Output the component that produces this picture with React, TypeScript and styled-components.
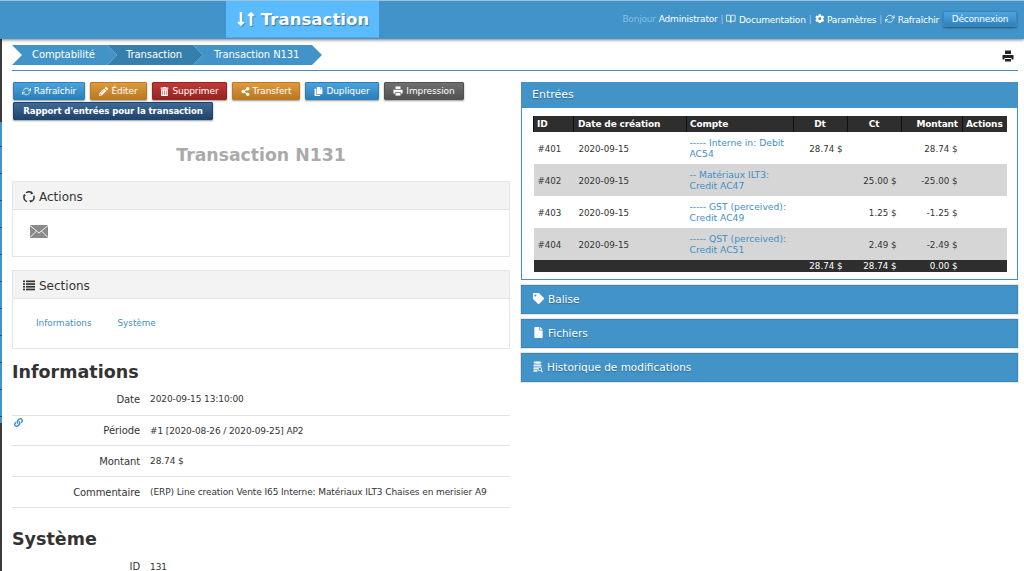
import React from "react";
import styled, { createGlobalStyle } from "styled-components";
import { FaPencilAlt, FaTrashAlt, FaShareAlt, FaCopy, FaCog, FaTag, FaFile, FaLink, FaLongArrowAltDown, FaLongArrowAltUp } from "react-icons/fa";
import { FiBookOpen, FiRefreshCw } from "react-icons/fi";

const Global = createGlobalStyle`
  html, body { margin: 0; padding: 0; background: #fff; height: 571px; overflow: hidden; }
  body { font-family: "DejaVu Sans", Verdana, sans-serif; font-size: 9px; color: #333; }
  * { box-sizing: border-box; }
`;
const Page = styled.div`
  width: 1024px; height: 571px; overflow: hidden; position: relative; background: #fff;
`;
const EdgeStrip = styled.div`
  position: absolute; left: 0; top: 39px; width: 2px; height: 532px;
  background:
    linear-gradient(#3a3a3a 0 83px, transparent 83px 384px, #3a3a3a 384px),
    repeating-linear-gradient(#4193c8 0 26px, #2f4f66 26px 27px);
`;
const Header = styled.header`
  height: 39px; background: #4193c8; border-top: 1px solid #9cc4dc;
  box-shadow: 0 1px 3px rgba(0,0,0,.5); display: flex; justify-content: space-between; position: relative; z-index: 2;
  padding: 0 7px 0 226px;
`;
const Logo = styled.div`
  width: 153px; height: 36px; background: #5abcff; color: #fff; display: flex; align-items: center; justify-content: center; gap: 5px;
  font: bold 16.6px "DejaVu Sans", sans-serif; text-shadow: 1px 1px 1px rgba(0,0,0,.4); box-shadow: 0 1px 0 #56a9e0;
`;
const Arrows = styled.span`display: flex; font-size: 16px; & svg { margin: 0 -3px; filter: drop-shadow(1px 1px 0 rgba(0,0,0,.25)); }`;
const TopNav = styled.nav`
  display: flex; align-items: center; gap: 3px; color: #fff; height: 36px; font-size: 9px; letter-spacing: -.2px;
  & svg { font-size: 9.5px; vertical-align: -1px; margin-right: 3px; }
`;
const Hello = styled.span`color: #86c0e2;`;
const Sep = styled.span`color: #a4cde6;`;
const LogoutBtn = styled.button`
  width: 74px; height: 16px; margin-left: 1px; border: 1px solid #3a87bb; border-radius: 2px; color: #fff; font: 9px "DejaVu Sans", sans-serif;
  letter-spacing: -.2px; background: linear-gradient(#4ea6e0, #2f83bd); box-shadow: 0 1px 2px rgba(0,0,0,.45); padding: 0;
`;
const Crumbs = styled.div`
  margin: 6px 6px 0 12px; height: 26px; border-bottom: 1px solid #4a8fbc; display: flex; justify-content: space-between; align-items: flex-start;
`;
const CrumbList = styled.div`display: flex; height: 20px;`;
const Crumb = styled.div<{ $w: number; $dark?: boolean; $pad: number }>`
  width: ${p => p.$w}px; height: 20px; margin-right: -10px; padding-left: ${p => p.$pad}px;
  color: #fff; font-size: 10px; line-height: 20px; letter-spacing: -.1px; background: ${p => p.$dark ? "#367fad" : "#4193c8"};
  clip-path: polygon(0 0, calc(100% - 10px) 0, 100% 50%, calc(100% - 10px) 100%, 0 100%, 10px 50%);
  z-index: ${p => p.$dark ? 1 : 0}; white-space: nowrap;
`;
const PrintIcon = styled.span`color: #222; margin: 5px 4px 0 0; line-height: 0;`;
const Columns = styled.div`display: grid; grid-template-columns: 498px 497px; gap: 11px; margin: 11px 0 0 12px;`;
const Left = styled.div`display: flex; flex-direction: column;`;
const Right = styled.div`display: flex; flex-direction: column;`;
const Buttons = styled.div`display: flex; flex-wrap: wrap; gap: 2px 5px; margin-left: 1px;`;
const colors: Record<string, [string, string]> = {
  blue: ["#4ba2da", "#2c7fb8"], orange: ["#dd9a3e", "#b97a22"], red: ["#bf3a36", "#962421"], gray: ["#6f6f6f", "#525252"], navy: ["#3f6a96", "#1f446d"],
};
const Btn = styled.button<{ $c: string; $w: number; $bold?: boolean }>`
  width: ${p => p.$w}px; height: 18px; padding: 0; border: 1px solid ${p => colors[p.$c][1]}; border-radius: 1px; color: #fff;
  font: ${p => p.$bold ? "bold 8.6px" : "normal 9px"} "DejaVu Sans", sans-serif; letter-spacing: -.1px;
  background: linear-gradient(${p => colors[p.$c][0]}, ${p => colors[p.$c][1]});
  box-shadow: 0 1px 2px rgba(0,0,0,.4); display: flex; align-items: center; justify-content: center; gap: 3px; white-space: nowrap;
  & svg { font-size: 9px; flex: none; }
`;
const Title = styled.h1`
  margin: 26px 0 0; height: 19px; font: bold 17.3px/19px "DejaVu Sans", sans-serif; color: #aaa; text-align: center; letter-spacing: 0;
`;
const Panel = styled.section<{ $h: number; $mt: number }>`
  height: ${p => p.$h}px; margin-top: ${p => p.$mt}px; border: 1px solid #e5e5e5;
`;
const PanelHead = styled.div`
  height: 28px; background: #f3f3f3; border-bottom: 1px solid #e3e3e3; display: flex; align-items: center; gap: 4px; padding: 2px 0 0 10px;
  font-size: 12px; color: #333;
`;
const MailRow = styled.div`padding: 15px 0 0 17px; line-height: 0;`;
const LinkRow = styled.div`display: flex; gap: 26px; padding: 19px 0 0 23px; font-size: 8.8px; color: #3f8fc7;`;
const H2 = styled.h2<{ $mt: number }>`margin: ${p => p.$mt}px 0 0; font: bold 17.5px/22px "DejaVu Sans", sans-serif; color: #333;`;
const InfoRow = styled.div<{ $h: number; $line: boolean }>`
  display: grid; grid-template-columns: 128px 1fr; column-gap: 10px; align-items: center; height: ${p => p.$h}px; position: relative;
  border-bottom: ${p => p.$line ? "1px solid #e2e2e2" : "0"};
`;
const Label = styled.div`text-align: right; font-size: 10px; letter-spacing: -.1px;`;
const Value = styled.div`font-size: 9px; letter-spacing: -.1px; white-space: nowrap;`;
const Anchor = styled.span`position: absolute; left: 2px; top: 2px; font-size: 9px; color: #3f8fc7; line-height: 0;`;
const Entries = styled.section`height: 198px; border: 1px solid #4a8fbc;`;
const BlueHead = styled.div`
  height: 25px; background: #4193c8; color: #fff; font-size: 11px; display: flex; align-items: center; padding: 0 0 2px 10px;
  text-shadow: 0 1px 1px rgba(0,0,0,.3);
`;
const TableWrap = styled.div`padding: 8px 11px 0;`;
const Table = styled.table`
  width: 473px; border-collapse: collapse; table-layout: fixed; font-size: 8.7px; color: #333;
`;
const Th = styled.th<{ $align?: string; $pl?: number }>`
  height: 16px; background: #2e2e2e; color: #fff; font-weight: bold; padding: 0 4px 0 ${p => p.$pl ?? 3}px; border-left: 1px solid #111; text-align: ${p => p.$align || "left"};
  font-size: 9px; letter-spacing: -.15px;
`;
const Tr = styled.tr<{ $alt?: boolean }>`background: ${p => p.$alt ? "#d6d6d6" : "#fff"};`;
const Td = styled.td<{ $align?: string; $pl?: number; $pt?: number }>`
  height: 32px; padding: ${p => p.$pt ?? 3}px 5px 0 ${p => p.$pl ?? 5}px; text-align: ${p => p.$align || "left"}; line-height: 11.5px;
`;
const AccountLink = styled.span`color: #3f8fc7; display: block; font-size: 9.2px; white-space: nowrap;`;
const Foot = styled.td<{ $align?: string }>`
  height: 12px; background: #2e2e2e; color: #fff; padding: 0 5px; text-align: ${p => p.$align || "left"}; line-height: 11px;
`;
const Accordion = styled.div`
  height: 29px; margin-top: 5px; background: #4193c8; border: 1px solid #3d86b6; box-shadow: 0 0 0 1px #e6e6e6; color: #fff; font-size: 10.5px;
  display: flex; align-items: center; gap: 4px; padding: 0 0 2px 11px; text-shadow: 0 1px 1px rgba(0,0,0,.3);
  & svg { font-size: 11px; }
`;

const PrintSvg = () => (
  <svg width="12" height="12" viewBox="0 0 12 12" fill="currentColor">
    <rect x="3" y="0.5" width="6" height="3.5" />
    <path d="M0.5 5h11v4.5H9.5V8h-7v1.5H0.5z" />
    <rect x="3" y="9" width="6" height="2.5" />
  </svg>
);
const SmallPrint = () => (
  <svg width="10" height="10" viewBox="0 0 12 12" fill="currentColor">
    <rect x="3" y="0.5" width="6" height="3" />
    <path d="M0.5 4.5h11v4.5H9.5V7.5h-7V9H0.5z" />
    <rect x="3" y="8.5" width="6" height="3" />
  </svg>
);
const RingIcon = () => (
  <svg width="12" height="12" viewBox="0 0 12 12" fill="none" stroke="#333" strokeWidth="1.4">
    <path d="M3 1.8A5 5 0 0 1 9 1.8" />
    <path d="M10.8 4.6A5 5 0 0 1 8 10.6" />
    <path d="M4 10.6A5 5 0 0 1 1.2 4.6" />
    <path d="M8 0.2L10.4 2.4L7.6 3.4z" fill="#333" stroke="none" />
    <path d="M9.4 9.4L7.2 11.8L6.4 9z" fill="#333" stroke="none" />
    <path d="M0 5.4L1.2 2.8L3 5z" fill="#333" stroke="none" />
  </svg>
);
const ListIcon = () => (
  <svg width="12" height="11" viewBox="0 0 12 11" fill="#333">
    {[0.5, 3.2, 5.9, 8.6].map(y => (
      <g key={y}>
        <rect x="0" y={y} width="2" height="1.7" />
        <rect x="3" y={y} width="9" height="1.7" />
      </g>
    ))}
  </svg>
);
const MailIcon = () => (
  <svg width="18" height="13" viewBox="0 0 18 13">
    <rect width="18" height="13" fill="#8a8a8a" />
    <path d="M0 0.5L9 8L18 0.5M0 12.5L6.5 6M18 12.5L11.5 6" fill="none" stroke="#fff" strokeWidth="0.9" />
  </svg>
);
const HistoryIcon = () => (
  <svg width="10" height="12" viewBox="0 0 10 12" fill="#e8eef2">
    <ellipse cx="4.5" cy="1.6" rx="4" ry="1.4" />
    <rect x="0.5" y="3.6" width="8" height="2" rx="0.6" />
    <rect x="0.5" y="6.2" width="5" height="2" rx="0.6" />
    <rect x="0.5" y="8.8" width="4" height="2" rx="0.6" />
    <circle cx="6.8" cy="8" r="1.8" fill="none" stroke="#e8eef2" strokeWidth="1" />
    <path d="M8 9.4L9.6 11.2" stroke="#e8eef2" strokeWidth="1.1" />
  </svg>
);

const rows = [
  ["#401", "----- Interne in: Debit", "AC54", "28.74 $", "", "28.74 $"],
  ["#402", "-- Matériaux ILT3:", "Credit AC47", "", "25.00 $", "-25.00 $"],
  ["#403", "----- GST (perceived):", "Credit AC49", "", "1.25 $", "-1.25 $"],
  ["#404", "----- QST (perceived):", "Credit AC51", "", "2.49 $", "-2.49 $"],
];

export default function App() {
  return (
    <Page>
      <Global />
      <EdgeStrip />
      <Header>
        <Logo><Arrows><FaLongArrowAltDown /><FaLongArrowAltUp /></Arrows>Transaction</Logo>
        <TopNav>
          <Hello>Bonjour</Hello> <span>Administrator</span><Sep>|</Sep>
          <span><FiBookOpen />Documentation</span><Sep>|</Sep>
          <span><FaCog />Paramètres</span><Sep>|</Sep>
          <span><FiRefreshCw />Rafraîchir</span>
          <LogoutBtn>Déconnexion</LogoutBtn>
        </TopNav>
      </Header>
      <Crumbs>
        <CrumbList>
          <Crumb $w={105} $pad={20}>Comptabilité</Crumb>
          <Crumb $w={96} $pad={19} $dark>Transaction</Crumb>
          <Crumb $w={129} $pad={21}>Transaction N131</Crumb>
        </CrumbList>
        <PrintIcon><PrintSvg /></PrintIcon>
      </Crumbs>
      <Columns>
        <Left>
          <Buttons>
            <Btn $c="blue" $w={72}><FiRefreshCw />Rafraîchir</Btn>
            <Btn $c="orange" $w={57}><FaPencilAlt />Éditer</Btn>
            <Btn $c="red" $w={75}><FaTrashAlt />Supprimer</Btn>
            <Btn $c="orange" $w={68}><FaShareAlt />Transfert</Btn>
            <Btn $c="blue" $w={74}><FaCopy />Dupliquer</Btn>
            <Btn $c="gray" $w={80}><SmallPrint />Impression</Btn>
            <Btn $c="navy" $w={200} $bold>Rapport d'entrées pour la transaction</Btn>
          </Buttons>
          <Title>Transaction N131</Title>
          <Panel $h={76} $mt={16}>
            <PanelHead><RingIcon />Actions</PanelHead>
            <MailRow><MailIcon /></MailRow>
          </Panel>
          <Panel $h={79} $mt={13}>
            <PanelHead><ListIcon />Sections</PanelHead>
            <LinkRow><span>Informations</span><span>Système</span></LinkRow>
          </Panel>
          <H2 $mt={12}>Informations</H2>
          <InfoRow $h={33} $line><Label>Date</Label><Value>2020-09-15 13:10:00</Value></InfoRow>
          <InfoRow $h={30} $line><Anchor><FaLink /></Anchor><Label>Période</Label><Value>#1 [2020-08-26 / 2020-09-25] AP2</Value></InfoRow>
          <InfoRow $h={31} $line><Label>Montant</Label><Value>28.74 $</Value></InfoRow>
          <InfoRow $h={31} $line><Label>Commentaire</Label><Value>(ERP) Line creation Vente I65 Interne: Matériaux ILT3 Chaises en merisier A9</Value></InfoRow>
          <H2 $mt={20}>Système</H2>
          <InfoRow $h={33} $line={false}><Label>ID</Label><Value>131</Value></InfoRow>
        </Left>
        <Right>
          <Entries>
            <BlueHead>Entrées</BlueHead>
            <TableWrap>
              <Table>
                <colgroup>
                  <col style={{ width: 40 }} /><col style={{ width: 113 }} /><col style={{ width: 107 }} /><col style={{ width: 54 }} /><col style={{ width: 54 }} /><col style={{ width: 61 }} /><col style={{ width: 44 }} />
                </colgroup>
                <thead>
                  <tr>
                    <Th>ID</Th><Th $pl={4}>Date de création</Th><Th>Compte</Th><Th $align="center">Dt</Th><Th $align="center">Ct</Th><Th $align="right">Montant</Th><Th>Actions</Th>
                  </tr>
                </thead>
                <tbody>
                  {rows.map((r, i) => (
                    <Tr key={r[0]} $alt={i % 2 === 1}>
                      <Td $pl={4}>{r[0]}</Td><Td>2020-09-15</Td>
                      <Td $pl={3} $pt={0}><AccountLink>{r[1]}</AccountLink><AccountLink>{r[2]}</AccountLink></Td>
                      <Td $align="right">{r[3]}</Td><Td $align="right">{r[4]}</Td><Td $align="right">{r[5]}</Td><Td />
                    </Tr>
                  ))}
                  <tr>
                    <Foot /><Foot /><Foot /><Foot $align="right">28.74 $</Foot><Foot $align="right">28.74 $</Foot><Foot $align="right">0.00 $</Foot><Foot />
                  </tr>
                </tbody>
              </Table>
            </TableWrap>
          </Entries>
          <Accordion><FaTag />Balise</Accordion>
          <Accordion><FaFile />Fichiers</Accordion>
          <Accordion><HistoryIcon />Historique de modifications</Accordion>
        </Right>
      </Columns>
    </Page>
  );
}
